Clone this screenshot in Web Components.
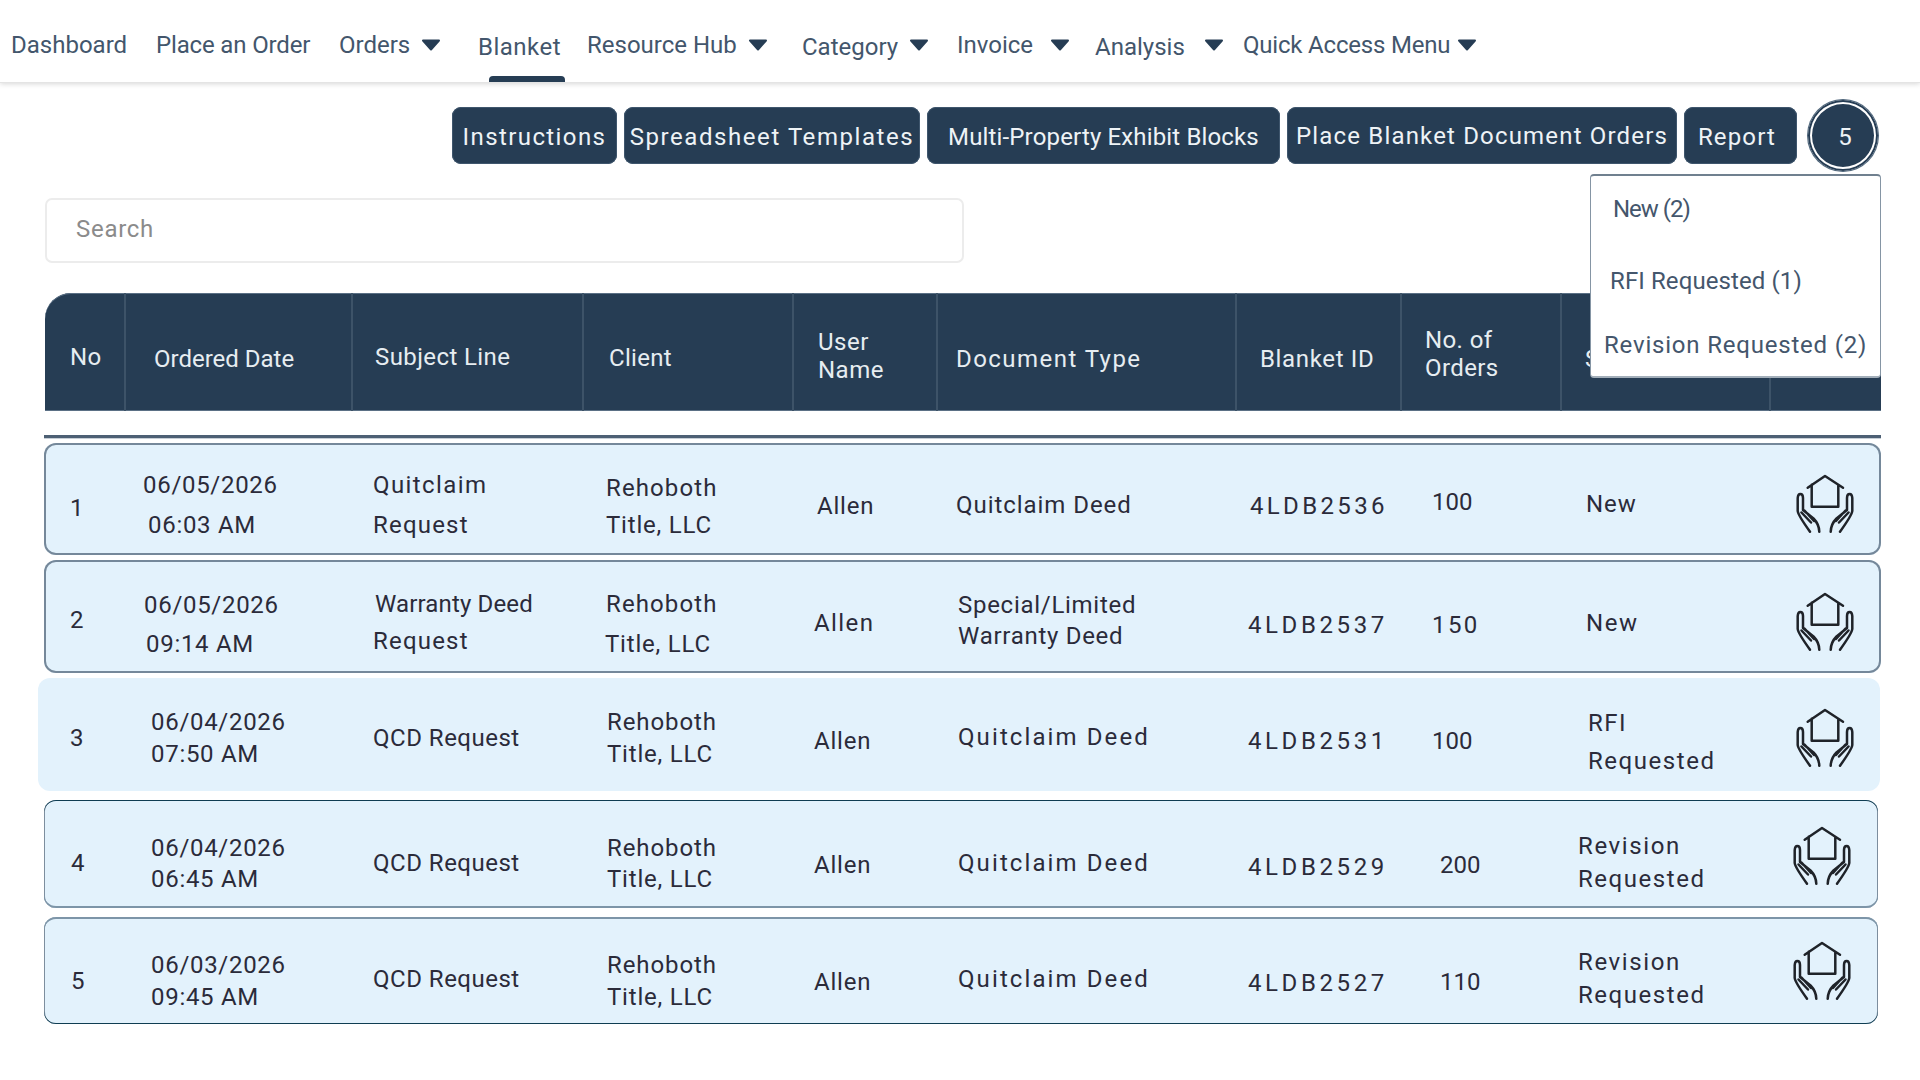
<!DOCTYPE html>
<html lang="en">
<head>
<meta charset="utf-8">
<title>Blanket</title>
<style>
  html, body { margin: 0; background: #fff; }
  body { font-family: Roboto, "Liberation Sans", sans-serif; }
</style>
</head>
<body>
<blanket-page></blanket-page>
<script>
const NAVY = '#263d54';

// Barra de navegacion
class NavItem extends HTMLElement {
    constructor() {
        super();
        this.attachShadow({ mode: 'open' });
    }
    connectedCallback() {
        const w = this.getAttribute('w');
        const dy = this.getAttribute('dy') || 0;
        const ls = this.getAttribute('ls') || 0;
        const caret = this.getAttribute('caret');
        const active = this.hasAttribute('active');
        this.shadowRoot.innerHTML = `
            <style>
                :host { display: flex; flex-direction: column; flex: 0 0 ${w}px; height: 82px; box-sizing: border-box; padding-top: ${30 + Number(dy)}px; }
                .label { display: flex; align-items: center; height: 30px; font-size: 24px; line-height: 30px; letter-spacing: ${ls}px; color: #43566c; white-space: nowrap; }
                svg { margin-left: ${caret}px; margin-top: -${1 + 2 * Number(dy)}px; flex: none; }
                .bar { margin: auto 0 0 11px; width: 76px; height: 6px; border-radius: 4px 4px 0 0; background: ${NAVY}; }
            </style>
            <div class="label"><slot></slot>${caret !== null ? `<svg width="20" height="12" viewBox="0 0 20 12"><path d="M2 1.5H18L10 10.5Z" fill="${NAVY}" stroke="${NAVY}" stroke-width="2" stroke-linejoin="round"/></svg>` : ''}</div>
            ${active ? '<div class="bar"></div>' : ''}
        `;
    }
}
customElements.define('nav-item', NavItem);

class TopNav extends HTMLElement {
    constructor() {
        super();
        this.attachShadow({ mode: 'open' });
    }
    connectedCallback() {
        this.shadowRoot.innerHTML = `
            <style>
                :host { display: flex; height: 82px; padding-left: 11px; background: #fff; box-shadow: 0 1px 0 #e4e4e4, 0 2px 5px rgba(0,0,0,.16); position: relative; }
            </style>
            <nav-item w="145">Dashboard</nav-item>
            <nav-item w="183" ls="-.15">Place an Order</nav-item>
            <nav-item w="139" caret="11">Orders</nav-item>
            <nav-item w="109" dy="2" ls=".5" active>Blanket</nav-item>
            <nav-item w="215" caret="11">Resource Hub</nav-item>
            <nav-item w="155" dy="2" caret="11">Category</nav-item>
            <nav-item w="138" caret="17">Invoice</nav-item>
            <nav-item w="148" dy="2" caret="19">Analysis</nav-item>
            <nav-item w="240" ls="-.2" caret="7">Quick Access Menu</nav-item>
        `;
    }
}
customElements.define('top-nav', TopNav);

// Botones de arriba
class ActionButton extends HTMLElement {
    constructor() {
        super();
        this.attachShadow({ mode: 'open' });
    }
    connectedCallback() {
        const w = this.getAttribute('w');
        const ls = this.getAttribute('ls') || '1.5';
        const pr = this.getAttribute('pr') || 0;
        this.shadowRoot.innerHTML = `
            <style>
                :host { display: flex; align-items: center; justify-content: center; width: ${w}px; height: 57px; box-sizing: border-box; padding: 3px ${pr}px 0 0; background: ${NAVY}; border-radius: 9px; box-shadow: inset 0 0 0 1px #3f566d; color: #eef3f6; font-size: 24px; letter-spacing: ${ls}px; white-space: nowrap; }
            </style>
            <slot></slot>
        `;
    }
}
customElements.define('action-button', ActionButton);

class CountBadge extends HTMLElement {
    constructor() {
        super();
        this.attachShadow({ mode: 'open' });
    }
    connectedCallback() {
        this.shadowRoot.innerHTML = `
            <style>
                :host { display: flex; align-items: center; justify-content: center; width: 70px; height: 71px; box-sizing: border-box; margin-left: 4px; border-radius: 50%; background: ${NAVY}; border: 4px solid #fff; outline: 2px solid ${NAVY}; outline-offset: -2px; box-shadow: 0 0 0 1px #50677c; color: #eef3f6; font-size: 24px; padding: 2px 0 0 4px; }
            </style>
            <slot></slot>
        `;
    }
}
customElements.define('count-badge', CountBadge);

class ActionBar extends HTMLElement {
    constructor() {
        super();
        this.attachShadow({ mode: 'open' });
    }
    connectedCallback() {
        this.shadowRoot.innerHTML = `
            <style>
                :host { display: flex; align-items: center; justify-content: flex-end; gap: 7px; margin-top: 18px; padding-right: 42px; height: 71px; }
            </style>
            <action-button w="165" ls="1.4">Instructions</action-button>
            <action-button w="296" ls="1.57">Spreadsheet Templates</action-button>
            <action-button w="353" ls=".15">Multi-Property Exhibit Blocks</action-button>
            <action-button w="390" ls="1.17" pr="-1">Place Blanket Document Orders</action-button>
            <action-button w="113" ls="1.15" pr="7">Report</action-button>
            <count-badge>5</count-badge>
        `;
    }
}
customElements.define('action-bar', ActionBar);

class StatusMenu extends HTMLElement {
    constructor() {
        super();
        this.attachShadow({ mode: 'open' });
    }
    connectedCallback() {
        this.shadowRoot.innerHTML = `
            <style>
                :host { position: absolute; top: 174px; left: 1590px; width: 291px; height: 204px; box-sizing: border-box; background: #fff; border: 1px solid #8595a4; border-top: 2px solid #70808f; border-bottom: 2px solid #a3afba; border-radius: 4px; color: #44566c; font-size: 24px; white-space: nowrap; }
                div { position: absolute; }
            </style>
            <div style="left: 22px; top: 19px; letter-spacing: -1px;">New (2)</div>
            <div style="left: 19px; top: 91px; letter-spacing: .1px;">RFI Requested (1)</div>
            <div style="left: 13px; top: 155px; letter-spacing: .8px;">Revision Requested (2)</div>
        `;
    }
}
customElements.define('status-menu', StatusMenu);

class SearchBox extends HTMLElement {
    constructor() {
        super();
        this.attachShadow({ mode: 'open' });
    }
    connectedCallback() {
        this.shadowRoot.innerHTML = `
            <style>
                :host { display: block; width: 919px; height: 65px; box-sizing: border-box; margin: 27px 0 0 45px; border: 2px solid #ececec; border-radius: 7px; background: #fff; }
                input { width: 100%; height: 100%; box-sizing: border-box; border: 0; outline: 0; padding: 0 0 3px 29px; background: transparent; font: 24px Roboto, "Liberation Sans", sans-serif; letter-spacing: .7px; }
                input::placeholder { color: #8b8b8b; opacity: 1; }
            </style>
            <input placeholder="Search">
        `;
    }
}
customElements.define('search-box', SearchBox);

// Tabla
const COLS = [125, 352, 583, 793, 937, 1236, 1401, 1561, 1770];

class TableHead extends HTMLElement {
    constructor() {
        super();
        this.attachShadow({ mode: 'open' });
    }
    connectedCallback() {
        const titulos = [
            { t: ['No'], x: 70, y: 357, ls: .5 },
            { t: ['Ordered Date'], x: 154, y: 359, ls: 0 },
            { t: ['Subject Line'], x: 375, y: 357, ls: .4 },
            { t: ['Client'], x: 609, y: 358, ls: .3 },
            { t: ['User', 'Name'], x: 818, y: 342, lh: 28, ls: .5 },
            { t: ['Document Type'], x: 956, y: 359, ls: 1.45 },
            { t: ['Blanket ID'], x: 1260, y: 359, ls: .65 },
            { t: ['No. of', 'Orders'], x: 1425, y: 340, lh: 28, ls: .4 },
            { t: ['Status'], x: 1585, y: 359, ls: .5 },
            { t: [''], x: 1790, y: 359 }
        ];
        const inicio = [45, ...COLS.map(c => c - 1)];
        const anchos = inicio.map((c, i) => (inicio[i + 1] || 1881) - c);
        this.shadowRoot.innerHTML = `
            <style>
                :host { display: grid; grid-template-columns: ${anchos.map(a => a + 'px').join(' ')}; width: 1836px; height: 118px; margin: 30px 0 0 45px; background: ${NAVY}; border-radius: 26px 0 0 0; box-shadow: inset 0 1px 0 #5b7085, inset 0 -1px 0 #5b7085; color: #e6edf1; font-size: 24px; }
                .c { box-sizing: border-box; white-space: nowrap; }
                .c + .c { border-left: 2px solid #3d5368; }
            </style>
            ${titulos.map((h, i) => {
                const lh = h.lh || 30;
                return `<div class="c" style="padding: ${h.y - 293 - lh / 2}px 0 0 ${h.x - inicio[i] - (i ? 2 : 0)}px; line-height: ${lh}px; letter-spacing: ${h.ls || 0}px">${h.t.join('<br>')}</div>`;
            }).join('')}
        `;
    }
}
customElements.define('table-head', TableHead);

class HouseHands extends HTMLElement {
    constructor() {
        super();
        this.attachShadow({ mode: 'open' });
    }
    connectedCallback() {
        const mano = 'M12.7 33Q13 29 15.3 29Q18 29 18 33V45L28.5 53.5Q34 59 34.3 66.7M12.7 33V46Q13 50 25 66.7M19.5 45.5L29 56M16.5 47.5L26 57.5';
        this.shadowRoot.innerHTML = `
            <style>
                :host { display: block; width: 60px; height: 60px; }
                svg { display: block; }
            </style>
            <svg width="60" height="60" viewBox="10 9 60 60" fill="none" stroke="#1f2329" stroke-width="2.5" stroke-linejoin="round" stroke-linecap="round">
                <path d="M22.7 22.7L40 11L58 22.7M26.7 19.8V41.7H53.3V19.8"/>
                <path d="${mano}"/>
                <path d="${mano}" transform="translate(80 0) scale(-1 1)"/>
            </svg>
        `;
    }
}
customElements.define('house-hands', HouseHands);

class OrderCell extends HTMLElement {
    constructor() {
        super();
        this.attachShadow({ mode: 'open' });
    }
    connectedCallback() {
        this.shadowRoot.innerHTML = `
            <style>
                :host { display: block; min-width: 0; box-sizing: border-box; white-space: nowrap; }
            </style>
            <slot></slot>
        `;
    }
}
customElements.define('order-cell', OrderCell);

class OrderRow extends HTMLElement {
    constructor() {
        super();
        this.attachShadow({ mode: 'open' });
    }
    connectedCallback() {
        const d = this.datos;
        const inicio = [d.left, ...COLS];
        const anchos = inicio.map((c, i) => (inicio[i + 1] || d.right) - c);
        const celda = (c, i) => {
            const ys = c.y;
            const lh = ys.length > 1 ? ys[1] - ys[0] : 30;
            const xs = c.x;
            const lineas = c.t.map((t, n) => {
                const ls = Array.isArray(c.ls) ? c.ls[n] : c.ls;
                return `<div style="margin-left: ${xs[n] === undefined ? 0 : xs[n] - xs[0]}px; letter-spacing: ${ls === undefined ? .8 : ls}px">${t}</div>`;
            }).join('');
            return `<order-cell style="padding: ${ys[0] - d.top - lh / 2 + 1}px 0 0 ${xs[0] - inicio[i]}px; line-height: ${lh}px">${lineas}</order-cell>`;
        };
        this.shadowRoot.innerHTML = `
            <style>
                :host { display: grid; grid-template-columns: ${anchos.map(a => a + 'px').join(' ')}; width: ${d.right - d.left}px; height: ${d.bottom - d.top}px; margin: ${d.gap}px 0 0 ${d.left}px; background: #e3f2fc; border-radius: 12px; box-shadow: ${d.edge}; color: #2b2b3a; font-size: 24px; }
                .icono { padding: ${d.iconY - d.top}px 0 0 ${d.iconX - COLS[8]}px; }
            </style>
            ${d.cells.map(celda).join('')}
            <div class="icono"><house-hands></house-hands></div>
        `;
    }
}
customElements.define('order-row', OrderRow);

const BORDE_GRIS = 'inset 0 0 0 2px #75889a';
const BORDE_TEAL = 'inset 0 1px 0 #0f3d52, inset 0 -2px 0 #7d95a8, inset 1px 0 0 #7d8e9e, inset -1px 0 0 #7d8e9e';
const BORDE_TEAL2 = 'inset 0 2px 0 #7d95a8, inset 0 -1px 0 #0f3d52, inset 1px 0 0 #7d8e9e, inset -1px 0 0 #7d8e9e';

const FECHA = .7;
const REHOBOTH = [1.1, .8];
const REHOBOTH2 = [.9, .8];
const FILAS = [
    {
        top: 443, bottom: 555, left: 44, right: 1881, edge: BORDE_GRIS, iconX: 1795, iconY: 474,
        cells: [
            { t: ['1'], x: [70], y: [507] },
            { t: ['06/05/2026', '06:03 AM'], x: [143, 148], y: [484, 524], ls: FECHA },
            { t: ['Quitclaim', 'Request'], x: [373, 373], y: [484, 524], ls: [1.4, 1.2] },
            { t: ['Rehoboth', 'Title, LLC'], x: [606, 606], y: [487, 524], ls: REHOBOTH },
            { t: ['Allen'], x: [817], y: [505] },
            { t: ['Quitclaim Deed'], x: [956], y: [504], ls: .95 },
            { t: ['4LDB2536'], x: [1250], y: [505], ls: 3.35 },
            { t: ['100'], x: [1432], y: [501], ls: 0 },
            { t: ['New'], x: [1586], y: [503], ls: .9 }
        ]
    },
    {
        top: 560, bottom: 673, left: 44, right: 1881, edge: BORDE_GRIS, iconX: 1795, iconY: 592,
        cells: [
            { t: ['2'], x: [70], y: [619] },
            { t: ['06/05/2026', '09:14 AM'], x: [144, 146], y: [604, 643], ls: FECHA },
            { t: ['Warranty Deed', 'Request'], x: [375, 373], y: [603, 640], ls: [.15, 1.2] },
            { t: ['Rehoboth', 'Title, LLC'], x: [606, 605], y: [603, 643], ls: REHOBOTH },
            { t: ['Allen'], x: [814], y: [622], ls: 1.4 },
            { t: ['Special/Limited', 'Warranty Deed'], x: [958, 958], y: [604, 635], ls: .72 },
            { t: ['4LDB2537'], x: [1248], y: [624], ls: 3.6 },
            { t: ['150'], x: [1432], y: [624], ls: 2.4 },
            { t: ['New'], x: [1586], y: [622], ls: 1.6 }
        ]
    },
    {
        top: 678, bottom: 791, left: 38, right: 1880, edge: 'none', iconX: 1795, iconY: 708,
        cells: [
            { t: ['3'], x: [70], y: [737] },
            { t: ['06/04/2026', '07:50 AM'], x: [151, 151], y: [721, 753], ls: FECHA },
            { t: ['QCD Request'], x: [373], y: [737], ls: .5 },
            { t: ['Rehoboth', 'Title, LLC'], x: [607, 607], y: [721, 753], ls: REHOBOTH2 },
            { t: ['Allen'], x: [814], y: [740] },
            { t: ['Quitclaim Deed'], x: [958], y: [736], ls: 2.1 },
            { t: ['4LDB2531'], x: [1248], y: [740], ls: 3.6 },
            { t: ['100'], x: [1432], y: [740], ls: 0 },
            { t: ['RFI', 'Requested'], x: [1588, 1588], y: [722, 760], ls: [1.5, 1.55] }
        ]
    },
    {
        top: 800, bottom: 908, left: 44, right: 1878, edge: BORDE_TEAL, iconX: 1792, iconY: 826,
        cells: [
            { t: ['4'], x: [71], y: [862] },
            { t: ['06/04/2026', '06:45 AM'], x: [151, 151], y: [847, 878], ls: FECHA },
            { t: ['QCD Request'], x: [373], y: [862], ls: .5 },
            { t: ['Rehoboth', 'Title, LLC'], x: [607, 607], y: [847, 878], ls: REHOBOTH2 },
            { t: ['Allen'], x: [814], y: [864] },
            { t: ['Quitclaim Deed'], x: [958], y: [862], ls: 2.1 },
            { t: ['4LDB2529'], x: [1248], y: [866], ls: 3.6 },
            { t: ['200'], x: [1440], y: [864], ls: 0 },
            { t: ['Revision', 'Requested'], x: [1578, 1578], y: [845, 878], ls: [1.6, 1.55] }
        ]
    },
    {
        top: 917, bottom: 1024, left: 44, right: 1878, edge: BORDE_TEAL2, iconX: 1792, iconY: 941,
        cells: [
            { t: ['5'], x: [71], y: [980] },
            { t: ['06/03/2026', '09:45 AM'], x: [151, 151], y: [964, 996], ls: FECHA },
            { t: ['QCD Request'], x: [373], y: [978], ls: .5 },
            { t: ['Rehoboth', 'Title, LLC'], x: [607, 607], y: [964, 996], ls: REHOBOTH2 },
            { t: ['Allen'], x: [814], y: [981] },
            { t: ['Quitclaim Deed'], x: [958], y: [978], ls: 2.1 },
            { t: ['4LDB2527'], x: [1248], y: [982], ls: 3.6 },
            { t: ['110'], x: [1440], y: [981], ls: 0 },
            { t: ['Revision', 'Requested'], x: [1578, 1578], y: [961, 994], ls: [1.6, 1.55] }
        ]
    }
];

class BlanketPage extends HTMLElement {
    constructor() {
        super();
        this.attachShadow({ mode: 'open' });
    }
    connectedCallback() {
        this.shadowRoot.innerHTML = `
            <style>
                :host { display: block; position: relative; width: 1920px; height: 1080px; overflow: hidden; background: #fff; font-family: Roboto, "Liberation Sans", sans-serif; }
                .linea { height: 3px; width: 1837px; margin: 24px 0 0 44px; background: #4d6074; box-shadow: 0 1px 0 #c6ced6; }
                .filas { margin-top: 5px; }
            </style>
            <top-nav></top-nav>
            <action-bar></action-bar>
            <search-box></search-box>
            <table-head></table-head>
            <div class="linea"></div>
            <div class="filas"></div>
            <status-menu></status-menu>
        `;
        const filas = this.shadowRoot.querySelector('.filas');
        FILAS.forEach((f, i) => {
            const fila = document.createElement('order-row');
            fila.datos = { ...f, gap: i === 0 ? 0 : f.top - FILAS[i - 1].bottom };
            filas.appendChild(fila);
        });
    }
}
customElements.define('blanket-page', BlanketPage);
</script>
</body>
</html>
